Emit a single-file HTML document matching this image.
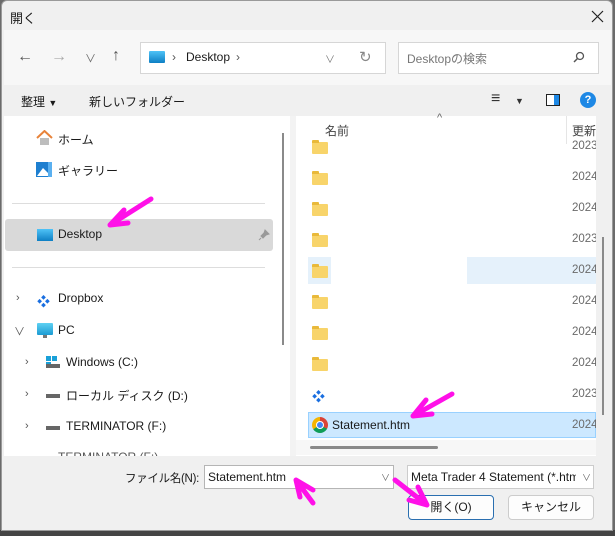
<!DOCTYPE html><html><head><meta charset="utf-8"><style>
*{margin:0;padding:0;box-sizing:border-box}
body{width:615px;height:536px;overflow:hidden;background:#6b6b6b;font-family:"Liberation Sans","Noto Sans CJK JP",sans-serif;font-size:12px;color:#1a1a1a;position:relative}
.a{position:absolute;white-space:nowrap}
.fold{position:absolute;width:16px;height:12px;background:#f8d46a;border-radius:1px}
.fold:before{content:"";position:absolute;left:0;top:-2px;width:7px;height:3px;background:#e9b93a;border-radius:1px 1px 0 0}
.date{position:absolute;left:572px;color:#6a6a6a;font-size:11.5px}
.chev{position:absolute;color:#555;font-size:11px}
</style></head><body>
<div class="a" style="left:0;top:530px;width:615px;height:6px;background:#444"></div>
<div class="a" style="left:1px;top:0;width:612px;height:531px;background:#f0f0f0;border:1px solid #9a9a9a;border-radius:6px 6px 0 0"></div>
<div class="a" style="left:10px;top:8px;font-size:13px">開く</div>
<svg class="a" style="left:591px;top:10px" width="13" height="13"><path d="M1 1L12 12M12 1L1 12" stroke="#222" stroke-width="1.2"/></svg>
<div class="a" style="left:4px;top:30px;width:607px;height:55px;background:#f7f7f7"></div>
<div class="a" style="left:17px;top:48px;font-size:16px;color:#555">←</div>
<div class="a" style="left:51px;top:48px;font-size:16px;color:#aaa">→</div>
<div class="a" style="left:85px;top:50px;font-size:11px;color:#666">∨</div>
<div class="a" style="left:112px;top:47px;font-size:16px;color:#555">↑</div>
<div class="a" style="left:140px;top:42px;width:246px;height:32px;background:#fff;border:1px solid #d6d6d6"></div>
<div class="a" style="left:149px;top:51px;width:16px;height:12px;background:linear-gradient(#4fc3f7,#0e7fc4);border-radius:1px"></div>
<div class="a" style="left:172px;top:50px;color:#555">›</div>
<div class="a" style="left:186px;top:50px;font-size:12px">Desktop</div>
<div class="a" style="left:236px;top:50px;color:#555">›</div>
<div class="a" style="left:325px;top:51px;font-size:10px;color:#777">∨</div>
<div class="a" style="left:359px;top:48px;font-size:15px;color:#888">↻</div>
<div class="a" style="left:398px;top:42px;width:201px;height:32px;background:#fff;border:1px solid #d6d6d6"></div>
<div class="a" style="left:407px;top:50px;color:#777;font-size:12px">Desktopの検索</div>
<svg class="a" style="left:573px;top:51px" width="12" height="12"><circle cx="7" cy="5" r="3.5" fill="none" stroke="#555" stroke-width="1.3"/><line x1="4.5" y1="7.5" x2="1" y2="11" stroke="#555" stroke-width="1.5"/></svg>
<div class="a" style="left:21px;top:93px;font-size:12px">整理 <span style="font-size:9px">▼</span></div>
<div class="a" style="left:89px;top:93px;font-size:12px">新しいフォルダー</div>
<div class="a" style="left:491px;top:90px;font-size:16px;color:#333">≡</div>
<div class="a" style="left:515px;top:96px;font-size:9px;color:#333">▼</div>
<div class="a" style="left:546px;top:94px;width:14px;height:12px;border:1.5px solid #222;background:linear-gradient(90deg,#fff 60%,#1e88e5 60%)"></div>
<div class="a" style="left:580px;top:92px;width:16px;height:16px;border-radius:50%;background:#1e88e5;color:#fff;font-weight:bold;font-size:11px;text-align:center;line-height:16px">?</div>
<!-- left pane -->
<div class="a" style="left:4px;top:116px;width:286px;height:340px;background:#fff"></div>
<div class="a" style="left:282px;top:133px;width:2px;height:212px;background:#8a8a8a"></div>
<svg class="a" style="left:36px;top:130px" width="17" height="16"><path d="M1 8L8.5 1L16 8" fill="none" stroke="#e8833a" stroke-width="2"/><rect x="4" y="8" width="9" height="7" fill="#bdbdbd"/></svg>
<div class="a" style="left:58px;top:131px;font-size:12px">ホーム</div>
<svg class="a" style="left:36px;top:162px" width="17" height="16"><rect x="0" y="0" width="16" height="15" fill="#1e7fd0"/><path d="M1 14L7 6L15 14Z" fill="#fff"/><rect x="12" y="0" width="4" height="15" fill="#5ab0f0"/></svg>
<div class="a" style="left:58px;top:162px;font-size:12px">ギャラリー</div>
<div class="a" style="left:12px;top:203px;width:253px;height:1px;background:#ddd"></div>
<div class="a" style="left:5px;top:219px;width:268px;height:32px;background:#d9d9d9;border-radius:3px"></div>
<div class="a" style="left:37px;top:229px;width:16px;height:12px;background:linear-gradient(#4fc3f7,#0e7fc4)"></div>
<div class="a" style="left:58px;top:227px;font-size:12px">Desktop</div>
<svg class="a" style="left:258px;top:229px" width="12" height="12"><path d="M7 1L11 5L8 6L5 9L3 7L6 4Z M3 9L1 11" fill="#999" stroke="#999"/></svg>
<div class="a" style="left:12px;top:267px;width:253px;height:1px;background:#ddd"></div>
<div class="chev" style="left:16px;top:292px">›</div>
<div class="a" style="left:37px;top:291px;color:#1a6fe0;font-size:13px">❖</div>
<div class="a" style="left:58px;top:291px;font-size:12px">Dropbox</div>
<div class="chev" style="left:14px;top:323px">∨</div>
<div class="a" style="left:37px;top:323px;width:16px;height:12px;background:linear-gradient(#5fd1f2,#1b9bd3);border-radius:1px"></div>
<div class="a" style="left:43px;top:335px;width:4px;height:3px;background:#777"></div>
<div class="a" style="left:58px;top:323px;font-size:12px">PC</div>
<div class="chev" style="left:25px;top:356px">›</div>
<div class="a" style="left:46px;top:356px;width:5px;height:5px;background:#19a0d8;box-shadow:6px 0 #19a0d8,0 6px #19a0d8"></div>
<div class="a" style="left:46px;top:364px;width:14px;height:4px;background:#666"></div>
<div class="a" style="left:66px;top:355px;font-size:12px">Windows (C:)</div>
<div class="chev" style="left:25px;top:388px">›</div>
<div class="a" style="left:46px;top:394px;width:14px;height:4px;background:#666"></div>
<div class="a" style="left:66px;top:387px;font-size:12px">ローカル ディスク (D:)</div>
<div class="chev" style="left:25px;top:420px">›</div>
<div class="a" style="left:46px;top:426px;width:14px;height:4px;background:#666"></div>
<div class="a" style="left:66px;top:419px;font-size:12px">TERMINATOR (F:)</div>
<div class="a" style="left:58px;top:450px;font-size:12px;color:#555;height:6px;overflow:hidden">TERMINATOR (F:)</div>
<!-- right pane -->
<div class="a" style="left:296px;top:116px;width:300px;height:340px;background:#fff"></div>
<div class="a" style="left:325px;top:122px;font-size:12px;color:#444">名前</div>
<div class="a" style="left:437px;top:112px;font-size:11px;color:#666">^</div>
<div class="a" style="left:566px;top:116px;width:1px;height:28px;background:#e5e5e5"></div>
<div class="a" style="left:572px;top:122px;font-size:12px;color:#444">更新</div>
<div class="a" style="left:467px;top:257px;width:129px;height:27px;background:#e5f1fb"></div>
<div class="a" style="left:308px;top:257px;width:23px;height:27px;background:#e5f1fb"></div>
<div class="fold" style="left:312px;top:142px"></div><div class="date" style="top:140px">2023</div>
<div class="fold" style="left:312px;top:173px"></div><div class="date" style="top:171px">2024</div>
<div class="fold" style="left:312px;top:204px"></div><div class="date" style="top:202px">2024</div>
<div class="fold" style="left:312px;top:235px"></div><div class="date" style="top:233px">2023</div>
<div class="fold" style="left:312px;top:266px"></div><div class="date" style="top:264px">2024</div>
<div class="fold" style="left:312px;top:297px"></div><div class="date" style="top:295px">2024</div>
<div class="fold" style="left:312px;top:328px"></div><div class="date" style="top:326px">2024</div>
<div class="fold" style="left:312px;top:359px"></div><div class="date" style="top:357px">2024</div>
<div class="a" style="left:312px;top:386px;color:#1a6fe0;font-size:13px">❖</div><div class="date" style="top:388px">2023</div>
<div class="a" style="left:308px;top:412px;width:288px;height:26px;background:#cce8ff;border:1px solid #99d1ff"></div>
<div class="a" style="left:312px;top:417px;width:16px;height:16px;border-radius:50%;background:conic-gradient(#db4437 0 33%,#0f9d58 0 66%,#f4b400 0)"></div>
<div class="a" style="left:316px;top:421px;width:8px;height:8px;border-radius:50%;background:#4285f4;border:1.5px solid #fff"></div>
<div class="a" style="left:332px;top:418px;font-size:12px">Statement.htm</div>
<div class="date" style="top:419px">2024</div>
<div class="a" style="left:596px;top:116px;width:15px;height:340px;background:#f0f0f0"></div>
<div class="a" style="left:602px;top:237px;width:2px;height:178px;background:#8a8a8a"></div>
<div class="a" style="left:296px;top:440px;width:300px;height:15px;background:#f7f7f7"></div>
<div class="a" style="left:310px;top:446px;width:128px;height:3px;background:#8a8a8a;border-radius:2px"></div>
<div class="a" style="left:290px;top:116px;width:6px;height:340px;background:#f3f3f3"></div>
<!-- bottom -->
<div class="a" style="left:4px;top:456px;width:607px;height:74px;background:#f0f0f0"></div>
<div class="a" style="left:100px;top:470px;width:99px;text-align:right;font-size:11.5px;letter-spacing:-0.3px">ファイル名(N):</div>
<div class="a" style="left:204px;top:465px;width:190px;height:24px;background:#fff;border:1px solid #b5b5b5"></div>
<div class="a" style="left:208px;top:470px;font-size:12px">Statement.htm</div>
<div class="a" style="left:381px;top:471px;font-size:9px;color:#666">∨</div>
<div class="a" style="left:407px;top:465px;width:187px;height:24px;background:#fff;border:1px solid #ccc;overflow:hidden"></div>
<div class="a" style="left:411px;top:470px;font-size:12px;width:165px;overflow:hidden">Meta Trader 4 Statement (*.htm;</div>
<div class="a" style="left:582px;top:471px;font-size:9px;color:#666">∨</div>
<div class="a" style="left:408px;top:495px;width:86px;height:25px;background:#fdfdfd;border:1.5px solid #2a6fb0;border-radius:4px;text-align:center;line-height:22px;font-size:12px">開く(O)</div>
<div class="a" style="left:508px;top:495px;width:86px;height:25px;background:#fdfdfd;border:1px solid #ccc;border-radius:4px;text-align:center;line-height:23px;font-size:12px">キャンセル</div>
<!-- arrows -->
<svg class="a" style="left:0;top:0" width="615" height="536"><g stroke="#ff10e8" stroke-width="5" stroke-linecap="round" fill="none">
<path d="M151 199L110 225M110 225L124 210M110 225L128 223"/>
<path d="M452 394L413 416M413 416L426 400M413 416L432 414"/>
<path d="M313 503L296 480M296 480L300 497M296 480L313 490"/>
<path d="M395 480L427 505M427 505L409 500M427 505L418 487"/>
</g></svg>
</body></html>
